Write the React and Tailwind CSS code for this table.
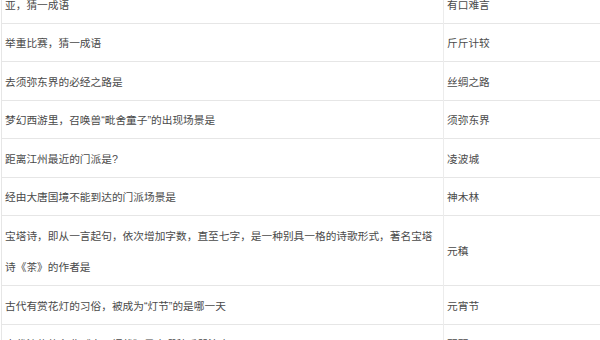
const rows = [
  { q: '亚，猜一成语', a: '有口难言' },
  { q: '举重比赛，猜一成语', a: '斤斤计较' },
  { q: '去须弥东界的必经之路是', a: '丝绸之路' },
  { q: '梦幻西游里，召唤兽“毗舍童子”的出现场景是', a: '须弥东界' },
  { q: '距离江州最近的门派是?', a: '凌波城' },
  { q: '经由大唐国境不能到达的门派场景是', a: '神木林' },
  {
    q: '宝塔诗，即从一言起句，依次增加字数，直至七字，是一种别具一格的诗歌形式，著名宝塔诗《茶》的作者是',
    a: '元稹',
  },
  { q: '古代有赏花灯的习俗，被成为“灯节”的是哪一天', a: '元宵节' },
  { q: '古代流传的名曲《十面埋伏》是由哪种乐器演奏', a: '琵琶' },
];

export default function App() {
  return (
    <div
      className="w-[600px] h-[340px] overflow-hidden bg-white"
      style={{ fontFamily: '"Liberation Sans", "Noto Sans CJK SC", sans-serif' }}
    >
      <table className="-mt-[15px] ml-px w-[640px] border-collapse border-l border-[#e6e6e6] text-[10.7px] leading-[31.5px] text-[#4a4a4a]">
        <tbody>
          {rows.map((r, i) => (
            <tr key={i} className="border-b border-[#e6e6e6]">
              <td className="w-[442px] pt-[4.5px] pb-[1.5px] pl-[3px] pr-[8px] align-middle">{r.q}</td>
              <td className="border-l border-[#ececec] pt-[4.5px] pb-[1.5px] pl-[3px] pr-2 align-middle">{r.a}</td>
            </tr>
          ))}
        </tbody>
      </table>
    </div>
  );
}
